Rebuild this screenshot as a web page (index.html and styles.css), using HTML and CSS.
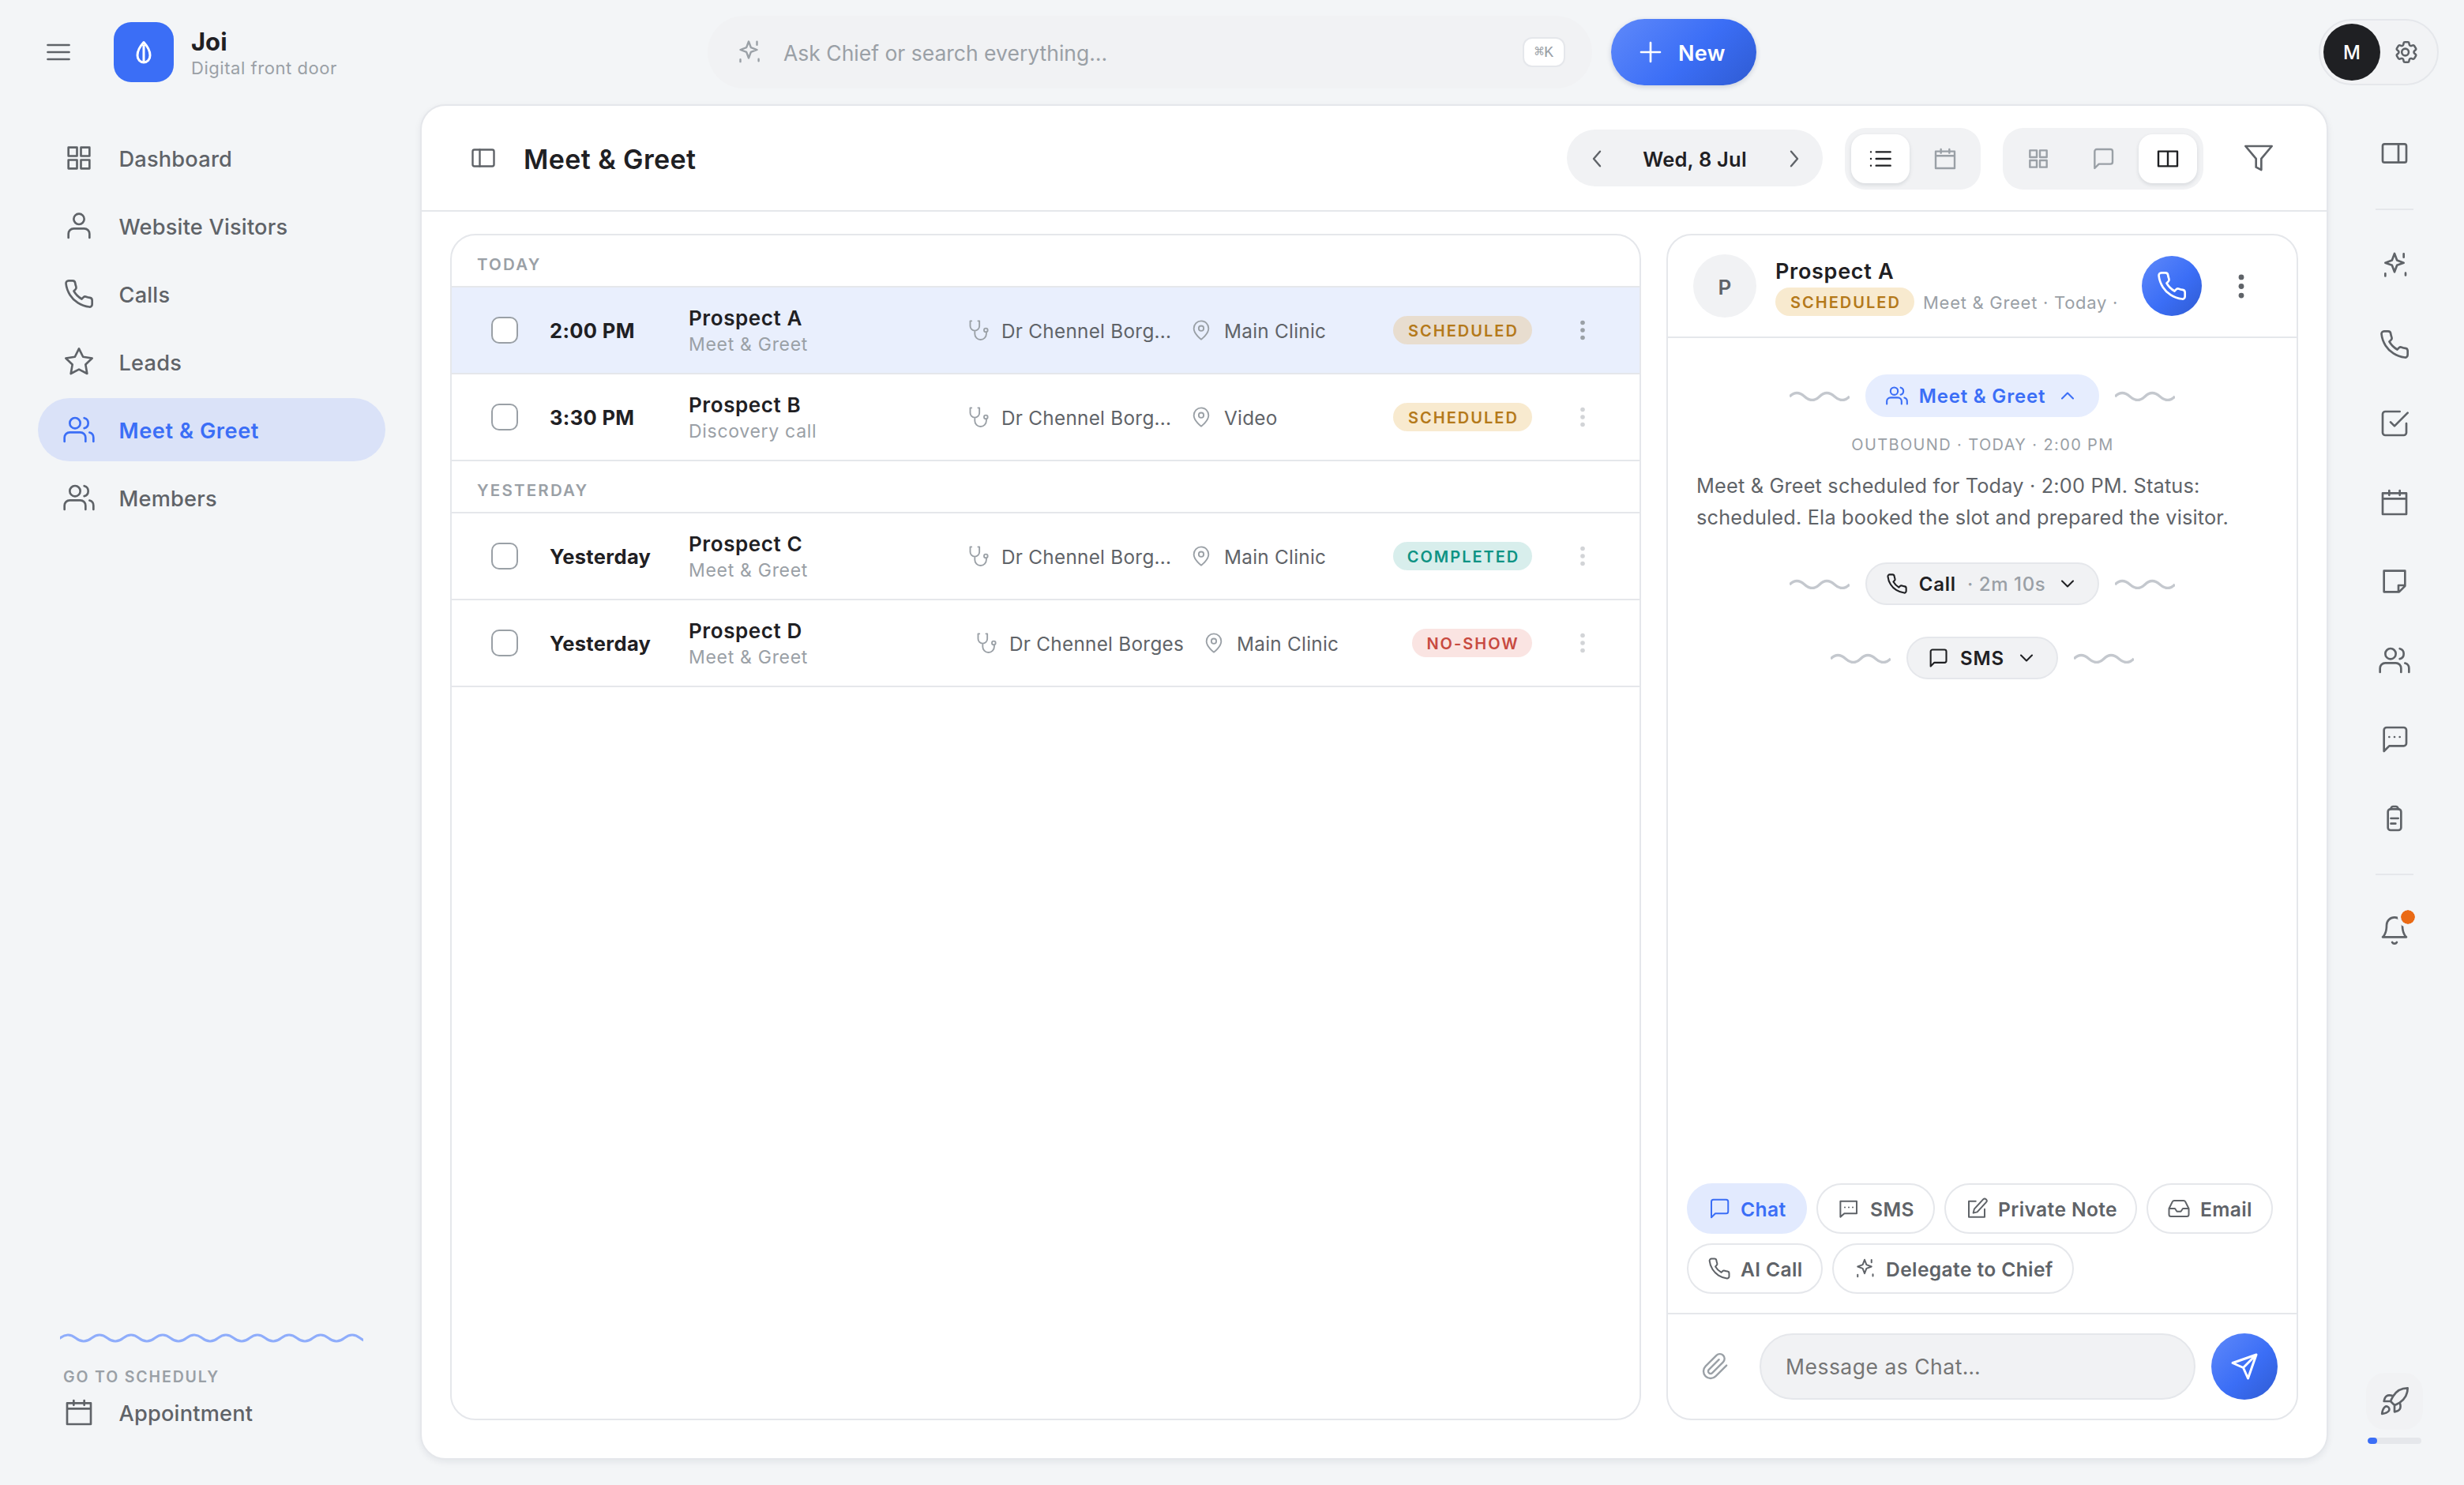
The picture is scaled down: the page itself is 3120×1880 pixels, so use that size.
FILE: index.html
```html
<!DOCTYPE html>
<html lang="en">
<head>
<meta charset="utf-8">
<title>Joi – Meet &amp; Greet</title>
<link rel="stylesheet" href="styles.css">
</head>
<body>
<svg class="sprite" aria-hidden="true">
  <symbol id="menu" viewBox="0 0 24 24"><path d="M3 6h18M3 12h18M3 18h18"/></symbol>
  <symbol id="leaf" viewBox="0 0 40 40"><path d="M20 7.500C15 13 12 18.500 12 24C12 29.500 15.500 33 20 33S28 29.500 28 24C28 18.500 25 13 20 7.500zM20 12v21"/></symbol>
  <symbol id="sparkle" viewBox="0 0 24 24"><path d="M12 3l1.900 5.100L19 10l-5.100 1.900L12 17l-1.900-5.100L5 10l5.100-1.900zM19 3.200v2.600M5 18.200v1.900M20.400 17.800v1.700"/></symbol>
  <symbol id="plus" viewBox="0 0 24 24"><path d="M12 3v18M3 12h18"/></symbol>
  <symbol id="gear" viewBox="0 0 24 24"><path d="M9.594 3.940c.09-.542.56-.94 1.110-.94h2.593c.55 0 1.020.398 1.110.94l.213 1.281c.063.374.313.686.645.87.074.04.147.083.22.127.325.196.72.257 1.075.124l1.217-.456a1.125 1.125 0 0 1 1.370.49l1.296 2.247a1.125 1.125 0 0 1-.26 1.431l-1.003.827c-.293.241-.438.613-.43.992a7.723 7.723 0 0 1 0 .255c-.008.378.137.75.43.991l1.004.827c.424.35.534.955.26 1.430l-1.298 2.247a1.125 1.125 0 0 1-1.369.491l-1.217-.456c-.355-.133-.75-.072-1.076.124a6.470 6.470 0 0 1-.22.128c-.331.183-.581.495-.644.869l-.213 1.281c-.09.543-.56.94-1.110.94h-2.594c-.55 0-1.019-.398-1.110-.94l-.213-1.281c-.062-.374-.312-.686-.644-.87a6.520 6.520 0 0 1-.22-.127c-.325-.196-.72-.257-1.076-.124l-1.217.456a1.125 1.125 0 0 1-1.369-.49l-1.297-2.247a1.125 1.125 0 0 1 .26-1.431l1.004-.827c.292-.24.437-.613.43-.991a6.932 6.932 0 0 1 0-.255c.007-.38-.138-.751-.43-.992l-1.004-.827a1.125 1.125 0 0 1-.26-1.430l1.297-2.247a1.125 1.125 0 0 1 1.370-.491l1.216.456c.356.133.751.072 1.076-.124.072-.044.146-.086.22-.128.332-.183.582-.495.644-.869l.214-1.280Z"/><circle cx="11" cy="12" r="3.100"/></symbol>
  <symbol id="grid" viewBox="0 0 24 24"><path d="M4 4h6.500v6.500H4zM13.500 4H20v6.500h-6.500zM4 13.500h6.500V20H4zM13.500 13.500H20V20h-6.500z"/></symbol>
  <symbol id="user" viewBox="0 0 24 24"><path d="M20 21v-3a4 4 0 0 0-4-4H8a4 4 0 0 0-4 4v3"/><circle cx="12" cy="6.800" r="4"/></symbol>
  <symbol id="users" viewBox="0 0 24 24"><path d="M17 21v-3a4 4 0 0 0-4-4H5a4 4 0 0 0-4 4v3M23 21v-3a4 4 0 0 0-3-3.870M16 3.130a4 4 0 0 1 0 7.750"/><circle cx="9" cy="7" r="4"/></symbol>
  <symbol id="phone" viewBox="0 0 24 24"><path d="M22 16.920v3a2 2 0 0 1-2.180 2 19.790 19.790 0 0 1-8.630-3.070 19.500 19.500 0 0 1-6-6 19.790 19.790 0 0 1-3.070-8.670A2 2 0 0 1 4.110 2h3a2 2 0 0 1 2 1.720 12.840 12.840 0 0 0 .7 2.810 2 2 0 0 1-.45 2.110L8.090 9.910a16 16 0 0 0 6 6l1.270-1.270a2 2 0 0 1 2.110-.45 12.840 12.840 0 0 0 2.810.7A2 2 0 0 1 22 16.920z"/></symbol>
  <symbol id="star" viewBox="0 0 24 24"><path d="M12 2l3.090 6.260L22 9.270l-5 4.870 1.180 6.880L12 17.770l-6.180 3.250L7 14.140 2 9.270l6.910-1.010z"/></symbol>
  <symbol id="calendar" viewBox="0 0 24 24"><path d="M3 5h18v16H3zM3 9.200h18M8 3v3.500M16 3v3.500"/></symbol>
  <symbol id="panel-left" viewBox="0 0 24 24"><rect x="3" y="5" width="18" height="14" rx="1.500"/><path d="M9 5v14"/></symbol>
  <symbol id="panel-right" viewBox="0 0 24 24"><rect x="3" y="5" width="18" height="14" rx="1.500"/><path d="M15 5v14"/></symbol>
  <symbol id="columns" viewBox="0 0 24 24"><path d="M3 5h18v14H3zM12 5v14"/></symbol>
  <symbol id="left" viewBox="0 0 24 24"><path d="M15 5l-6 7 6 7"/></symbol>
  <symbol id="right" viewBox="0 0 24 24"><path d="M9 5l6 7-6 7"/></symbol>
  <symbol id="up" viewBox="0 0 24 24"><path d="M6 15l6-6 6 6"/></symbol>
  <symbol id="down" viewBox="0 0 24 24"><path d="M6 9l6 6 6-6"/></symbol>
  <symbol id="list" viewBox="0 0 24 24"><path d="M8 5.500h13.500M8 12h13.500M8 18.500h13.500M3 5.500h.010M3 12h.010M3 18.500h.010"/></symbol>
  <symbol id="chat" viewBox="0 0 24 24"><path d="M21 15a2 2 0 0 1-2 2H8l-4 4V5a2 2 0 0 1 2-2h13a2 2 0 0 1 2 2z"/></symbol>
  <symbol id="chat-dots" viewBox="0 0 24 24"><path d="M21 15a2 2 0 0 1-2 2H8l-4 4V5a2 2 0 0 1 2-2h13a2 2 0 0 1 2 2zM8 10.200h.010M12 10.200h.010M16 10.200h.010"/></symbol>
  <symbol id="sms" viewBox="0 0 24 24"><path d="M3.500 4.500h16.500v12.500H7.500l-4 3.500zM8 10.700h.010M12 10.700h.010M16 10.700h.010"/></symbol>
  <symbol id="funnel" viewBox="0 0 24 24"><path d="M22 3H2l8 9.460V19l4 2v-8.540z"/></symbol>
  <symbol id="stethoscope" viewBox="0 0 24 24"><path d="M4.500 2H3V7.500a5 5 0 0 0 10 0V2H11.500M8 12.500v3.500a6 6 0 0 0 12.500 0v-2"/><circle cx="20" cy="12" r="2"/></symbol>
  <symbol id="pin" viewBox="0 0 24 24"><path d="M20 10c0 6-8 12-8 12s-8-6-8-12a8 8 0 0 1 16 0z"/><circle cx="12" cy="10" r="2.700"/></symbol>
  <symbol id="check" viewBox="0 0 24 24"><path d="M9 11l3 3L22 4M21 12v7a2 2 0 0 1-2 2H5a2 2 0 0 1-2-2V5a2 2 0 0 1 2-2h11"/></symbol>
  <symbol id="note" viewBox="0 0 24 24"><path d="M4 4h16v11.500L15.500 20H4zM20 15h-5v5"/></symbol>
  <symbol id="tablet" viewBox="0 0 24 24"><rect x="7" y="5" width="10" height="16" rx="2"/><path d="M9 5c.4-1.300 1-2 2-2h2c1 0 1.600.7 2 2M9.300 12h5.500M9.300 16h3.500"/></symbol>
  <symbol id="bell" viewBox="0 0 24 24"><path d="M18 8A6 6 0 0 0 6 8c0 7-3 9-3 9h18s-3-2-3-9M13.730 21a2 2 0 0 1-3.460 0"/></symbol>
  <symbol id="rocket" viewBox="0 0 24 24"><path d="M4.500 16.500c-1.500 1.260-2 5-2 5s3.740-.5 5-2c.71-.84.7-2.130-.09-2.910a2.180 2.180 0 0 0-2.910-.09zM12 15l-3-3a22 22 0 0 1 2-3.950A12.880 12.880 0 0 1 22 2c0 2.720-.78 7.500-6 11a22.350 22.350 0 0 1-4 2zM9 12H4s.55-3.030 2-4c1.620-1.080 5 0 5 0M12 15v5s3.030-.55 4-2c1.080-1.620 0-5 0-5"/></symbol>
  <symbol id="edit" viewBox="0 0 24 24"><path d="M11 4.500H4v16h16v-8M18.500 2.700a2.121 2.121 0 0 1 3 3L12.500 15.500l-4 1 1-4z"/></symbol>
  <symbol id="inbox" viewBox="0 0 24 24"><path d="M22 12h-6l-2 3h-4l-2-3H2M5.450 5.110L2 12v6a2 2 0 0 0 2 2h16a2 2 0 0 0 2-2v-6l-3.450-6.890A2 2 0 0 0 16.760 4H7.240a2 2 0 0 0-1.790 1.110z"/></symbol>
  <symbol id="clip" viewBox="0 0 24 24"><path d="M21.440 11.050l-9.190 9.190a6 6 0 0 1-8.490-8.490l9.190-9.190a4 4 0 0 1 5.660 5.660l-9.200 9.190a2 2 0 0 1-2.830-2.830l8.490-8.480"/></symbol>
  <symbol id="send" viewBox="0 0 24 24"><path d="M22 2L11 13M22 2l-7 20-4-9-9-4z"/></symbol>
  <symbol id="dots" viewBox="0 0 8 32"><g class="dot-fill"><circle cx="4" cy="6.500" r="2.800"/><circle cx="4" cy="16" r="2.800"/><circle cx="4" cy="25.500" r="2.800"/></g></symbol>
  <symbol id="squiggle" viewBox="0 0 76 14"><path d="M0 8q9-9 19 0t19 0t19 0t19 0"/></symbol>
</svg>

<header class="topbar">
  <div class="topbar-left">
    <svg class="icon i36 menu-btn"><use href="#menu"/></svg>
    <div class="logo"><svg class="leaf"><use href="#leaf"/></svg></div>
    <div class="brand"><div class="brand-name">Joi</div><div class="brand-sub">Digital front door</div></div>
  </div>
  <div class="search">
    <svg class="icon i36"><use href="#sparkle"/></svg>
    <span class="search-text">Ask Chief or search everything…</span>
    <kbd class="kbd">⌘K</kbd>
  </div>
  <button class="new-btn"><svg class="icon i32"><use href="#plus"/></svg><span>New</span></button>
  <div class="account"><div class="avatar-me">M</div><svg class="icon gear"><use href="#gear"/></svg></div>
</header>

<div class="shell">
  <aside class="sidebar">
    <nav class="nav">
      <a class="nav-item"><svg class="icon i40"><use href="#grid"/></svg><span>Dashboard</span></a>
      <a class="nav-item"><svg class="icon i40"><use href="#user"/></svg><span>Website Visitors</span></a>
      <a class="nav-item"><svg class="icon i40"><use href="#phone"/></svg><span>Calls</span></a>
      <a class="nav-item"><svg class="icon i40"><use href="#star"/></svg><span>Leads</span></a>
      <a class="nav-item active"><svg class="icon i40"><use href="#users"/></svg><span>Meet &amp; Greet</span></a>
      <a class="nav-item"><svg class="icon i40"><use href="#users"/></svg><span>Members</span></a>
    </nav>
    <div class="sidebar-foot">
      <svg class="long-wave" viewBox="0 0 384 12"><path d="M-20 6q10-8 20 0t20 0t20 0t20 0t20 0t20 0t20 0t20 0t20 0t20 0t20 0t20 0t20 0t20 0t20 0t20 0t20 0t20 0t20 0t20 0t20 0" transform="matrix(1 0 0 -1 0 12)"/></svg>
      <div class="foot-label">GO TO SCHEDULY</div>
      <a class="nav-item foot-item"><svg class="icon i40"><use href="#calendar"/></svg><span>Appointment</span></a>
    </div>
  </aside>

  <main class="card">
    <div class="card-head">
      <svg class="icon i36"><use href="#panel-left"/></svg>
      <h1 class="title">Meet &amp; Greet</h1>
      <div class="date-pill"><svg class="icon i32"><use href="#left"/></svg><span>Wed, 8 Jul</span><svg class="icon i32"><use href="#right"/></svg></div>
      <div class="seg">
        <div class="seg-btn on"><svg class="icon i32"><use href="#list"/></svg></div>
        <div class="seg-btn"><svg class="icon i32"><use href="#calendar"/></svg></div>
      </div>
      <div class="seg">
        <div class="seg-btn"><svg class="icon i32"><use href="#grid"/></svg></div>
        <div class="seg-btn"><svg class="icon i32"><use href="#chat"/></svg></div>
        <div class="seg-btn on"><svg class="icon i32"><use href="#columns"/></svg></div>
      </div>
      <div class="filter"><svg class="icon i40"><use href="#funnel"/></svg></div>
    </div>

    <div class="card-body">
      <section class="panel list">
        <div class="group">TODAY</div>
        <div class="row selected">
          <span class="box"></span><span class="time">2:00 PM</span>
          <div class="who"><div class="name">Prospect A</div><div class="kind">Meet &amp; Greet</div></div>
          <div class="meta doctor"><svg class="icon i28"><use href="#stethoscope"/></svg><span>Dr Chennel Borg...</span></div>
          <div class="meta place"><svg class="icon i28"><use href="#pin"/></svg><span>Main Clinic</span></div>
          <span class="badge scheduled">SCHEDULED</span><svg class="dots"><use href="#dots"/></svg>
        </div>
        <div class="row">
          <span class="box"></span><span class="time">3:30 PM</span>
          <div class="who"><div class="name">Prospect B</div><div class="kind">Discovery call</div></div>
          <div class="meta doctor"><svg class="icon i28"><use href="#stethoscope"/></svg><span>Dr Chennel Borg...</span></div>
          <div class="meta place"><svg class="icon i28"><use href="#pin"/></svg><span>Video</span></div>
          <span class="badge scheduled">SCHEDULED</span><svg class="dots"><use href="#dots"/></svg>
        </div>
        <div class="group">YESTERDAY</div>
        <div class="row">
          <span class="box"></span><span class="time">Yesterday</span>
          <div class="who"><div class="name">Prospect C</div><div class="kind">Meet &amp; Greet</div></div>
          <div class="meta doctor"><svg class="icon i28"><use href="#stethoscope"/></svg><span>Dr Chennel Borg...</span></div>
          <div class="meta place"><svg class="icon i28"><use href="#pin"/></svg><span>Main Clinic</span></div>
          <span class="badge completed">COMPLETED</span><svg class="dots"><use href="#dots"/></svg>
        </div>
        <div class="row roomy">
          <span class="box"></span><span class="time">Yesterday</span>
          <div class="who"><div class="name">Prospect D</div><div class="kind">Meet &amp; Greet</div></div>
          <div class="meta doctor"><svg class="icon i28"><use href="#stethoscope"/></svg><span>Dr Chennel Borges</span></div>
          <div class="meta place"><svg class="icon i28"><use href="#pin"/></svg><span>Main Clinic</span></div>
          <span class="badge noshow">NO-SHOW</span><svg class="dots"><use href="#dots"/></svg>
        </div>
      </section>

      <section class="panel detail">
        <div class="detail-head">
          <div class="avatar">P</div>
          <div class="info">
            <div class="info-name">Prospect A</div>
            <div class="info-sub"><span class="badge scheduled">SCHEDULED</span><span class="info-text">Meet &amp; Greet · Today · 2:00 PM</span></div>
          </div>
          <div class="call-btn"><svg class="icon i40"><use href="#phone"/></svg></div>
          <svg class="dots big"><use href="#dots"/></svg>
        </div>
        <div class="timeline">
          <div class="event"><svg class="wave"><use href="#squiggle"/></svg><div class="chip open"><svg class="icon i28"><use href="#users"/></svg><span>Meet &amp; Greet</span><svg class="icon i28"><use href="#up"/></svg></div><svg class="wave"><use href="#squiggle"/></svg></div>
          <div class="stamp">OUTBOUND · TODAY · 2:00 PM</div>
          <p class="copy">Meet &amp; Greet scheduled for Today · 2:00 PM. Status:<br>scheduled. Ela booked the slot and prepared the visitor.</p>
          <div class="event call"><svg class="wave"><use href="#squiggle"/></svg><div class="chip"><svg class="icon i28"><use href="#phone"/></svg><span>Call</span><span class="dur">· 2m 10s</span><svg class="icon i28"><use href="#down"/></svg></div><svg class="wave"><use href="#squiggle"/></svg></div>
          <div class="event text"><svg class="wave"><use href="#squiggle"/></svg><div class="chip"><svg class="icon i28"><use href="#chat"/></svg><span>SMS</span><svg class="icon i28"><use href="#down"/></svg></div><svg class="wave"><use href="#squiggle"/></svg></div>
        </div>
        <div class="channels">
          <div class="tab w-chat on"><svg class="icon i30"><use href="#chat"/></svg><span>Chat</span></div>
          <div class="tab w-sms"><svg class="icon i30"><use href="#sms"/></svg><span>SMS</span></div>
          <div class="tab w-note"><svg class="icon i30"><use href="#edit"/></svg><span>Private Note</span></div>
          <div class="tab w-email"><svg class="icon i30"><use href="#inbox"/></svg><span>Email</span></div>
          <div class="tab w-call"><svg class="icon i30"><use href="#phone"/></svg><span>AI Call</span></div>
          <div class="tab w-chief"><svg class="icon i30"><use href="#sparkle"/></svg><span>Delegate to Chief</span></div>
        </div>
        <div class="composer">
          <div class="attach"><svg class="icon i36"><use href="#clip"/></svg></div>
          <div class="field">Message as Chat…</div>
          <div class="send"><svg class="icon i36"><use href="#send"/></svg></div>
        </div>
      </section>
    </div>
  </main>

  <aside class="rail">
    <div class="rail-btn"><svg class="icon i40"><use href="#panel-right"/></svg></div>
    <div class="rail-line"></div>
    <div class="rail-btn"><svg class="icon i40"><use href="#sparkle"/></svg></div>
    <div class="rail-btn"><svg class="icon i40"><use href="#phone"/></svg></div>
    <div class="rail-btn"><svg class="icon i40"><use href="#check"/></svg></div>
    <div class="rail-btn"><svg class="icon i40"><use href="#calendar"/></svg></div>
    <div class="rail-btn"><svg class="icon i40"><use href="#note"/></svg></div>
    <div class="rail-btn"><svg class="icon i40"><use href="#users"/></svg></div>
    <div class="rail-btn"><svg class="icon i40"><use href="#chat-dots"/></svg></div>
    <div class="rail-btn"><svg class="icon i40"><use href="#tablet"/></svg></div>
    <div class="rail-line"></div>
    <div class="rail-btn"><svg class="icon i40"><use href="#bell"/></svg><span class="alert"></span></div>
    <div class="rail-foot"><div class="launch"><svg class="icon i40"><use href="#rocket"/></svg></div><div class="progress"><div class="progress-fill"></div></div></div>
  </aside>
</div>
</body>
</html>
```
FILE: styles.css
```css
:root {
  --blue: #3b6ef6;
  --ink: #1f2023;
  --body: #5f6368;
  --muted: #9aa0a6;
  --line: #e5e7eb;
  --fill: #f1f2f4;
  --page: #f3f5f7;
  --grad: linear-gradient(135deg, #5f89fa 0%, #3b6ef6 55%, #2f5bd2 100%);
}
* { box-sizing: border-box; }
body {
  margin: 0;
  width: 3120px;
  height: 1880px;
  overflow: hidden;
  background: var(--page);
  color: var(--ink);
  font-family: Inter, "Liberation Sans", sans-serif;
  display: flex;
  flex-direction: column;
}
.sprite { position: absolute; width: 0; height: 0; }
.icon { flex: none; display: block; fill: none; stroke: currentColor; stroke-width: 1.6; stroke-linecap: round; stroke-linejoin: round; }
.i28 { width: 28px; height: 28px; }
.i30 { width: 30px; height: 30px; }
.i32 { width: 32px; height: 32px; }
.i36 { width: 36px; height: 36px; }
.i40 { width: 40px; height: 40px; }
.dot-fill { fill: currentColor; stroke: none; }

/* top bar */
.topbar { height: 132px; flex: none; display: flex; align-items: center; padding-right: 32px; }
.topbar-left { width: 896px; display: flex; align-items: center; padding-left: 56px; }
.menu-btn { color: var(--body); margin-right: 52px; stroke-width: 1.8; }
.logo { width: 76px; height: 76px; border-radius: 22px; background: var(--blue); display: flex; align-items: center; justify-content: center; }
.leaf { width: 40px; height: 40px; fill: none; stroke: #fff; stroke-width: 3; stroke-linejoin: round; stroke-linecap: round; }
.brand { margin-left: 22px; padding-top: 1px; }
.brand-name { font-weight: 700; font-size: 31px; line-height: 38px; letter-spacing: 0; }
.brand-sub { font-size: 22px; line-height: 28px; letter-spacing: .55px; color: var(--muted); }
.search { width: 1120px; height: 92px; border-radius: 46px; background: var(--fill); color: var(--muted); display: flex; align-items: center; padding: 0 34px; }
.search-text { flex: 1; margin-left: 26px; padding-top: 1px; font-size: 26.5px; }
.kbd { width: 54px; height: 38px; border: 2px solid var(--line); border-radius: 12px; background: #fff; font: 20px/36px "Liberation Mono", monospace; text-align: center; }
.new-btn { width: 184px; height: 84px; margin-left: 24px; padding: 0 0 0 34px; border: 0; border-radius: 42px; background: var(--grad); color: #fff; box-shadow: 0 2px 6px rgba(20, 40, 90, .18); display: flex; align-items: center; gap: 19px; font: 600 27px/36px Inter, sans-serif; letter-spacing: .3px; }
.new-btn .icon { stroke-width: 2; }
.new-btn span { padding-top: 4px; }
.account { width: 152px; height: 84px; margin-left: auto; padding-left: 4px; border: 2px solid var(--line); border-radius: 42px; background: #f2f3f5; display: flex; align-items: center; }
.avatar-me { width: 72px; height: 72px; border-radius: 50%; background: var(--ink); color: #fff; font-weight: 500; font-size: 24px; line-height: 74px; text-align: center; }
.gear { width: 34px; height: 34px; margin-left: 16px; color: var(--body); stroke-width: 1.8; }

.shell { flex: 1; display: flex; align-items: flex-start; }

/* sidebar */
.sidebar { width: 532px; height: 1748px; padding: 28px 44px 62px 48px; display: flex; flex-direction: column; justify-content: space-between; }
.nav { display: flex; flex-direction: column; gap: 6px; }
.nav-item { height: 80px; padding-left: 32px; border-radius: 40px; display: flex; align-items: center; gap: 30.500px; color: var(--body); font-weight: 500; font-size: 27.2px; letter-spacing: .2px; }
.nav-item span { padding-top: 3px; }
.nav-item.active { background: #dae2f8; color: var(--blue); font-weight: 600; letter-spacing: .55px; }
.long-wave { display: block; width: 384px; height: 12px; margin: 0 0 31px 28px; fill: none; stroke: #8fadfb; stroke-width: 3; }
.foot-label { margin: 0 0 3px 32px; line-height: 24px; font-weight: 600; font-size: 19.5px; letter-spacing: 1.86px; color: var(--muted); }
.foot-item { height: 60px; }

/* main card */
.card { width: 2416px; height: 1716px; border: 2px solid var(--line); border-radius: 32px; background: #fff; box-shadow: 0 3px 8px rgba(20, 30, 50, .07); display: flex; flex-direction: column; }
.card-head { height: 134px; flex: none; padding: 0 44px 0 60px; border-bottom: 2px solid var(--line); display: flex; align-items: center; color: var(--body); }
.title { margin: 0 auto 0 33px; padding-top: 3px; color: var(--ink); font-weight: 600; font-size: 34px; letter-spacing: .4px; }
.date-pill { width: 324px; height: 72px; padding: 0 20px; border-radius: 36px; background: var(--fill); display: flex; align-items: center; justify-content: space-between; }
.date-pill .icon { margin: 2px 0 0 2px; stroke-width: 1.8; }
.date-pill span { padding-top: 2px; color: var(--ink); font-weight: 600; font-size: 25.500px; letter-spacing: .2px; }
.seg { height: 78px; margin: 2px 0 0 28px; padding: 8px; border-radius: 26px; background: var(--fill); display: flex; gap: 8px; color: var(--muted); }
.seg-btn { width: 74px; height: 62px; border-radius: 18px; display: flex; align-items: center; justify-content: center; }
.seg-btn .icon { stroke-width: 1.8; }
.seg-btn.on { background: #fff; color: var(--ink); box-shadow: 0 2px 5px rgba(20, 30, 50, .12); }
.filter { width: 84px; margin-left: 28px; display: flex; justify-content: center; }
.card-body { flex: 1; padding: 28px 36px 48px; display: flex; gap: 32px; }
.panel { border: 2px solid var(--line); border-radius: 32px; overflow: hidden; }

/* appointment list */
.list { width: 1508px; }
.group { height: 66px; padding: 9px 0 0 32px; border-bottom: 2px solid var(--line); font-weight: 600; font-size: 20.500px; line-height: 55px; letter-spacing: 2.2px; color: var(--muted); }
.row { height: 110px; padding: 0 54px 0 50px; border-bottom: 2px solid var(--line); display: flex; align-items: center; }
.row.selected { background: #e9effd; }
.box { width: 34px; height: 34px; margin-right: 40px; border: 2px solid var(--muted); border-radius: 10px; background: #fff; }
.time { width: 176px; padding-top: 1px; font-weight: 700; font-size: 25.500px; letter-spacing: .35px; }
.who { flex: 1; padding-top: 2px; }
.name { font-weight: 600; font-size: 26px; line-height: 34px; letter-spacing: .6px; }
.kind { font-size: 23px; line-height: 32px; letter-spacing: .7px; color: var(--muted); }
.meta { display: flex; align-items: center; gap: 15px; color: var(--muted); white-space: nowrap; }
.meta span { padding-top: 1px; color: var(--body); font-size: 24.300px; line-height: 34px; letter-spacing: .27px; }
.doctor { width: 282px; }
.place { width: 257px; }
.roomy .doctor { width: 288px; }
.roomy .place { width: 265px; }
.badge { flex: none; width: 176px; height: 36px; padding: 1px 0 0 2px; border-radius: 18px; font-weight: 600; font-size: 20px; line-height: 36px; letter-spacing: 2px; text-align: center; white-space: nowrap; }
.scheduled { background: #f8eacf; color: #b4791a; }
.selected .scheduled { background: #e8ddcf; }
.completed { background: #d8eeec; color: #0e9384; }
.noshow { width: 152px; background: #fae4e2; color: #c84a40; }
.dots { flex: none; width: 8px; height: 32px; margin: 0 14px 0 60px; color: #d2d4d7; }
.selected .dots { color: var(--muted); }

/* detail panel */
.detail { width: 800px; display: flex; flex-direction: column; }
.detail-head { height: 130px; flex: none; padding-left: 32px; border-bottom: 2px solid var(--line); display: flex; align-items: center; }
.avatar { width: 80px; height: 80px; border-radius: 50%; background: var(--fill); color: var(--body); font-weight: 600; font-size: 26px; line-height: 83px; text-align: center; }
.info { width: 440px; margin: 0 24px; }
.info-name { font-weight: 600; font-size: 27px; line-height: 40px; letter-spacing: .7px; }
.info-sub { display: flex; overflow: hidden; }
.info-text { margin-left: 11px; padding-top: 1px; white-space: nowrap; color: var(--muted); font-size: 22px; line-height: 36px; letter-spacing: .72px; }
.call-btn { width: 76px; height: 76px; border-radius: 50%; background: var(--grad); color: #fff; display: flex; align-items: center; justify-content: center; }
.dots.big { width: 10px; height: 39px; margin: 0 0 0 45px; color: var(--body); }
.timeline { flex: 1; padding-top: 46px; }
.event { display: flex; align-items: center; justify-content: center; gap: 20px; }
.event.call { margin-top: 37px; }
.event.text { margin-top: 40px; }
.wave { width: 76px; height: 14px; fill: none; stroke: #c4c8ce; stroke-width: 3.300; }
.chip { height: 54px; padding: 0 24px; border: 2px solid var(--line); border-radius: 27px; background: var(--fill); display: flex; align-items: center; gap: 14px; font-weight: 600; font-size: 24px; letter-spacing: .8px; }
.chip .icon { stroke-width: 1.8; }
.chip span { padding-top: 1px; }
.chip .dur { color: var(--muted); font-weight: 500; letter-spacing: .6px; }
.chip.open { background: #e6edfe; border-color: #e6edfe; color: var(--blue); }
.stamp { margin-top: 20px; padding-left: 1px; text-align: center; font-size: 20px; line-height: 30px; letter-spacing: 1.370px; color: var(--muted); }
.copy { margin: 17px 0 0 36px; white-space: nowrap; font-size: 25.300px; line-height: 40px; letter-spacing: .18px; color: var(--body); }
.channels { padding: 0 0 24px 24px; display: flex; flex-wrap: wrap; gap: 12px; }
.tab { height: 64px; padding-left: 24px; border: 2px solid var(--line); border-radius: 32px; display: flex; align-items: center; gap: 12px; color: var(--body); font-weight: 600; font-size: 24.600px; letter-spacing: .38px; white-space: nowrap; }
.tab span { padding-top: 2px; }
.tab.on { background: #e2eafe; border-color: #e2eafe; color: var(--blue); }
.w-chat { width: 152px; }
.w-sms { width: 150px; }
.w-note { width: 244px; }
.w-email { width: 160px; }
.w-call { width: 172px; }
.w-chief { width: 306px; }
.composer { height: 134px; flex: none; padding: 0 24px; border-top: 2px solid var(--line); display: flex; align-items: center; gap: 20px; }
.attach { width: 72px; display: flex; justify-content: center; color: var(--muted); }
.field { flex: 1; height: 84px; padding: 0 0 0 31px; border: 2px solid var(--line); border-radius: 42px; background: var(--fill); color: #757575; font-size: 26.500px; line-height: 80px; letter-spacing: .5px; }
.send { width: 84px; height: 84px; border-radius: 50%; background: var(--grad); color: #fff; display: flex; align-items: center; justify-content: center; }
.send .icon { stroke-width: 2; }

/* right rail */
.rail { width: 172px; height: 1748px; padding: 20px 4px 52px 0; display: flex; flex-direction: column; align-items: center; gap: 16px; color: var(--body); }
.rail-btn { position: relative; width: 84px; height: 84px; flex: none; display: flex; align-items: center; justify-content: center; }
.rail-line { width: 48px; height: 2px; flex: none; margin: 12px 0; background: var(--line); }
.alert { position: absolute; left: 46px; top: 12px; width: 26px; height: 26px; border: 4px solid var(--page); border-radius: 50%; background: #ea6a15; background-clip: padding-box; }
.rail-foot { margin-top: auto; display: flex; flex-direction: column; align-items: center; gap: 10px; }
.launch { width: 72px; height: 72px; border-radius: 24px; background: var(--fill); display: flex; align-items: center; justify-content: center; }
.progress { width: 68px; height: 8px; border-radius: 4px; background: var(--line); overflow: hidden; }
.progress-fill { width: 12px; height: 8px; border-radius: 4px; background: var(--blue); }
```
